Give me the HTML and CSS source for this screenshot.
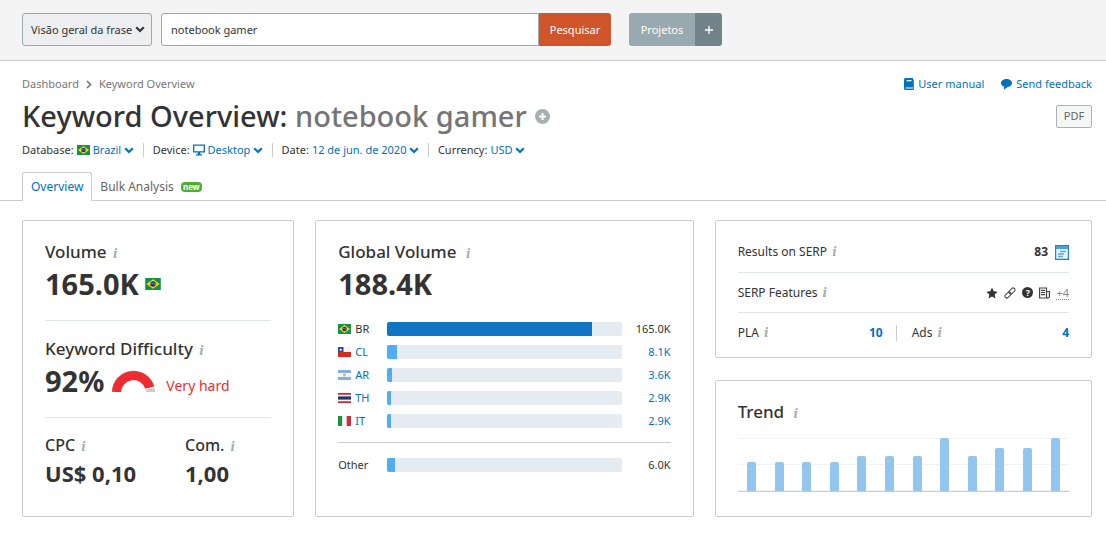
FILE: index.html
```html
<!DOCTYPE html>
<html lang="en">
<head>
<meta charset="utf-8">
<meta name="viewport" content="width=device-width, initial-scale=1">
<title>Keyword Overview: notebook gamer</title>
<link rel="stylesheet" href="styles.css">
</head>
<body>
<svg class="sprite" aria-hidden="true">
  <symbol id="chevron" viewBox="0 0 10 7"><path d="M1.2 1.2 5 5l3.8-3.8" fill="none" stroke="currentColor" stroke-width="2.2"/></symbol>
  <symbol id="flag-br" viewBox="0 0 13 10"><path fill="#129347" d="M0 0h13v10H0z"/><path fill="#f3d51f" d="M6.500 1 12 5 6.500 9 1 5z"/><circle cx="6.500" cy="5" r="2.300" fill="#29346f"/><path d="M4.500 4.300q2.200-.2 4 1.300" stroke="#9aa7c4" stroke-width=".6" fill="none"/></symbol>
  <symbol id="flag-cl" viewBox="0 0 13 10"><path fill="#f4f4f4" d="M0 0h13v5H0z"/><path fill="#d52b1e" d="M0 5h13v5H0z"/><path fill="#1f4a9c" d="M0 0h5.500v5H0z"/><path fill="#fff" d="m2.700 1 .5 1.200h1.200l-1 .8.4 1.200-1.100-.7-1.100.7.4-1.200-1-.8h1.200z"/></symbol>
  <symbol id="flag-ar" viewBox="0 0 13 10"><path fill="#7fb2dd" d="M0 0h13v10H0z"/><path fill="#f4f4f4" d="M0 3h13v4H0z"/><circle cx="6.500" cy="5" r="1.500" fill="#eeb04c"/></symbol>
  <symbol id="flag-th" viewBox="0 0 13 10"><path fill="#c9242f" d="M0 0h13v10H0z"/><path fill="#f4f4f4" d="M0 1.700h13v6.600H0z"/><path fill="#22346f" d="M0 3.400h13v3.200H0z"/></symbol>
  <symbol id="flag-it" viewBox="0 0 13 10"><path fill="#189048" d="M0 0h4.400v10H0z"/><path fill="#f4f4f4" d="M4.400 0h4.300v10H4.400z"/><path fill="#c9303a" d="M8.700 0H13v10H8.700z"/></symbol>
</svg>

<header class="topbar">
  <form class="search" onsubmit="return false">
    <span class="scope">
      <select class="scope-select" aria-label="Tipo de pesquisa"><option>Visão geral da frase</option></select>
      <svg class="chevron"><use href="#chevron"/></svg>
    </span>
    <span class="query">
      <input class="query-input" type="text" value="notebook gamer" aria-label="Frase">
      <button class="query-submit" type="submit">Pesquisar</button>
    </span>
  </form>
  <div class="projects">
    <button class="projects-open" type="button">Projetos</button>
    <button class="projects-add" type="button" aria-label="Novo projeto"><svg width="10" height="10" viewBox="0 0 10 10"><path d="M5 1v8M1 5h8" stroke="currentColor" stroke-width="1.300"/></svg></button>
  </div>
</header>

<section class="page-head">
  <div class="crumb-row">
    <nav class="crumbs" aria-label="Breadcrumb">
      <a href="#">Dashboard</a>
      <svg width="6" height="9" viewBox="0 0 6 9"><path d="m1 1 3.500 3.500L1 8" fill="none" stroke="#777" stroke-width="1.700"/></svg>
      <a href="#">Keyword Overview</a>
    </nav>
    <nav class="help" aria-label="Help">
      <a href="#"><svg width="10" height="12" viewBox="0 0 10 12"><path fill="currentColor" d="M1.500 0H9v9.500H1.500v1H9v-9h.8V12H1.500A1.500 1.500 0 0 1 0 10.500v-9A1.500 1.500 0 0 1 1.500 0z"/><path d="M2.500 2.700h5" stroke="#fff" stroke-width="1.200"/></svg>User manual</a>
      <a href="#"><svg width="11" height="12" viewBox="0 0 11 12"><path fill="currentColor" d="M5.500 1C8.600 1 11 2.700 11 5c0 2-1.800 3.700-4.400 4L3 11.700V8.600C1.200 8 0 6.600 0 5c0-2.300 2.400-4 5.500-4z"/></svg>Send feedback</a>
    </nav>
  </div>
  <div class="title-row">
    <h1 class="title">Keyword Overview: <span class="phrase">notebook gamer</span></h1>
    <button class="add" type="button" aria-label="Add keyword"><svg width="15" height="15" viewBox="0 0 15 15"><circle cx="7.500" cy="7.500" r="7.500" fill="#a5b0b3"/><path d="M7.500 4v7M4 7.500h7" stroke="#fff" stroke-width="2"/></svg></button>
    <button class="pdf" type="button">PDF</button>
  </div>
  <div class="filters">
    <div class="filter"><label for="database">Database:</label><svg class="flag"><use href="#flag-br"/></svg>
      <span class="pick"><select id="database"><option>Brazil</option></select><svg class="chevron"><use href="#chevron"/></svg></span></div>
    <div class="filter"><label for="device">Device:</label><svg width="12" height="12" viewBox="0 0 12 12"><path d="M.7 1.200h10.600v6.600H.7z" fill="none" stroke="#0071bc" stroke-width="1.300"/><path d="M4.800 8h2.400v2.200H9v1.300H3v-1.300h1.800z" fill="#0071bc"/></svg>
      <span class="pick"><select id="device"><option>Desktop</option></select><svg class="chevron"><use href="#chevron"/></svg></span></div>
    <div class="filter"><label for="date">Date:</label>
      <span class="pick"><select id="date"><option>12 de jun. de 2020</option></select><svg class="chevron"><use href="#chevron"/></svg></span></div>
    <div class="filter"><label for="currency">Currency:</label>
      <span class="pick"><select id="currency"><option>USD</option></select><svg class="chevron"><use href="#chevron"/></svg></span></div>
  </div>
</section>

<nav class="tabs" aria-label="Reports">
  <a class="tab tab-active" href="#" aria-current="page">Overview</a>
  <a class="tab" href="#">Bulk Analysis <span class="badge">new</span></a>
</nav>

<main class="board">
  <section class="card volume">
    <div class="metric">
      <h2 class="label">Volume <span class="info">i</span></h2>
      <p class="figure">165.0K <svg class="flag flag-large"><use href="#flag-br"/></svg></p>
    </div>
    <div class="metric">
      <h2 class="label">Keyword Difficulty <span class="info">i</span></h2>
      <p class="figure">92%
        <svg class="gauge" width="43" height="22" viewBox="0 0 43 22"><path d="M4.500 22a17 17 0 0 1 34 0" fill="none" stroke="#ccc" stroke-width="9"/><path d="M4.500 22a17 17 0 0 1 33.300-4.200" fill="none" stroke="#ee2c30" stroke-width="9"/><path d="m33 19.300 10-2.200" stroke="#fff"/></svg>
        <span class="verdict">Very hard</span></p>
    </div>
    <div class="metric metric-pair">
      <div><h2 class="label label-small">CPC <span class="info">i</span></h2><p class="figure figure-small">US$ 0,10</p></div>
      <div><h2 class="label label-small">Com. <span class="info">i</span></h2><p class="figure figure-small">1,00</p></div>
    </div>
  </section>

  <section class="card global">
    <h2 class="label">Global Volume <span class="info info-wide">i</span></h2>
    <p class="figure">188.4K</p>
    <table class="countries" aria-label="Volume by country">
      <tbody>
        <tr><th scope="row"><span class="country"><svg class="flag"><use href="#flag-br"/></svg>BR</span></th><td><div class="bar"><div class="fill fill-main" style="width:87.300%"></div></div></td><td class="amount">165.0K</td></tr>
        <tr><th scope="row"><a class="country" href="#"><svg class="flag"><use href="#flag-cl"/></svg>CL</a></th><td><div class="bar"><div class="fill" style="width:4.300%"></div></div></td><td class="amount"><a href="#">8.1K</a></td></tr>
        <tr><th scope="row"><a class="country" href="#"><svg class="flag"><use href="#flag-ar"/></svg>AR</a></th><td><div class="bar"><div class="fill" style="width:1.900%"></div></div></td><td class="amount"><a href="#">3.6K</a></td></tr>
        <tr><th scope="row"><a class="country" href="#"><svg class="flag"><use href="#flag-th"/></svg>TH</a></th><td><div class="bar"><div class="fill" style="width:1.500%"></div></div></td><td class="amount"><a href="#">2.9K</a></td></tr>
        <tr><th scope="row"><a class="country" href="#"><svg class="flag"><use href="#flag-it"/></svg>IT</a></th><td><div class="bar"><div class="fill" style="width:1.500%"></div></div></td><td class="amount"><a href="#">2.9K</a></td></tr>
      </tbody>
      <tbody class="rest">
        <tr><th scope="row">Other</th><td><div class="bar"><div class="fill" style="width:3.200%"></div></div></td><td class="amount">6.0K</td></tr>
      </tbody>
    </table>
  </section>

  <div class="side">
    <section class="card serp">
      <div class="serp-row"><span>Results on SERP <span class="info">i</span></span>
        <span class="serp-count">83 <a href="#" aria-label="View SERP"><svg width="14" height="15" viewBox="0 0 14 15"><path d="M.6.6h12.800v13.800H.6z" fill="#e8f4fc" stroke="#1d84c9" stroke-width="1.200"/><path d="M1 2.500h12" stroke="#4aa0dc" stroke-width="3"/><path d="M5 6.500h6M3 9h6M3 11.500h5" stroke="#5babdf" stroke-width="1.300"/></svg></a></span></div>
      <div class="serp-row"><span>SERP Features <span class="info">i</span></span>
        <span class="features">
          <svg width="12" height="12" viewBox="0 0 12 12"><path fill="#333" d="m6 .5 1.700 3.700 4 .5-3 2.700.8 4L6 9.400l-3.500 2 .8-4-3-2.700 4-.5z"/></svg>
          <svg width="12" height="12" viewBox="0 0 12 12" fill="none" stroke="#444"><rect x="-3.500" y="-1.900" width="7" height="3.800" rx="1.900" transform="translate(8 4) rotate(-45)"/><rect x="-3.500" y="-1.900" width="7" height="3.800" rx="1.900" transform="translate(4 8) rotate(-45)"/></svg>
          <span class="question">?</span>
          <svg width="11" height="12" viewBox="0 0 11 12" fill="none" stroke="#444" stroke-width="1.200"><path d="M.6 1h6.900v10H.6zM7.500 4.500h2.900V9.500a1.400 1.400 0 0 1-2.900 0M1 11h8"/><path d="M2 3.300h4M2 5.500h4M2 7.700h4"/></svg>
          <a class="more" href="#">+4</a>
        </span></div>
      <div class="serp-row serp-split">
        <div class="ad-stat"><span>PLA <span class="info">i</span></span><a href="#">10</a></div>
        <div class="ad-stat"><span>Ads <span class="info">i</span></span><a href="#">4</a></div>
      </div>
    </section>
    <section class="card trend">
      <h2 class="label">Trend <span class="info info-wide">i</span></h2>
      <div class="chart" role="img" aria-label="Monthly volume trend">
        <div class="slot"><div class="month" style="height:55%"></div></div>
        <div class="slot"><div class="month" style="height:55%"></div></div>
        <div class="slot"><div class="month" style="height:55%"></div></div>
        <div class="slot"><div class="month" style="height:55%"></div></div>
        <div class="slot"><div class="month" style="height:66%"></div></div>
        <div class="slot"><div class="month" style="height:66%"></div></div>
        <div class="slot"><div class="month" style="height:66%"></div></div>
        <div class="slot"><div class="month" style="height:100%"></div></div>
        <div class="slot"><div class="month" style="height:66%"></div></div>
        <div class="slot"><div class="month" style="height:81%"></div></div>
        <div class="slot"><div class="month" style="height:81%"></div></div>
        <div class="slot"><div class="month" style="height:100%"></div></div>
      </div>
    </section>
  </div>
</main>
</body>
</html>
```
FILE: styles.css
```css
* { box-sizing: border-box; }
body {
  margin: 0;
  background: #fff;
  color: #333;
  font: 11px/16px "Noto Sans", "Open Sans", sans-serif;
}
h1, h2, p { margin: 0; }
a { color: #0071bc; text-decoration: none; }
button, input, select { font: inherit; margin: 0; }
button { cursor: pointer; }
svg { flex: none; display: block; }
.sprite { display: none; }
.chevron { width: 10px; height: 7px; }
.flag { width: 13px; height: 10px; }
.flag-large { width: 16px; height: 12px; }

.topbar {
  display: flex;
  gap: 18px;
  padding: 13px 22px 14px;
  background: #f4f4f4;
  border-bottom: 1px solid #ccc;
}
.search { display: flex; gap: 9px; flex: 0 1 589px; }
.scope, .pick { display: inline-grid; align-items: center; }
.scope > *, .pick > * { grid-area: 1 / 1; }
.scope .chevron, .pick .chevron { justify-self: end; pointer-events: none; }
.scope { width: 130px; }
.scope .chevron { margin-right: 7px; }
.scope-select {
  appearance: none;
  width: 100%;
  height: 33px;
  padding: 0 16px 0 8px;
  border: 1px solid #98a9af;
  border-radius: 3px;
  background: #eceef0;
  color: #333;
}
.query { display: flex; flex: 1; }
.query-input {
  flex: 1;
  min-width: 0;
  height: 33px;
  padding: 0 9px;
  border: 1px solid #98a9af;
  border-radius: 3px 0 0 3px;
  background: #fff;
  color: #333;
}
.query-submit {
  width: 72px;
  padding: 0;
  border: 0;
  border-radius: 0 3px 3px 0;
  background: #d1552b;
  color: #fff;
}
.projects { display: flex; color: #fff; }
.projects button { height: 33px; padding: 0; border: 0; color: #fff; }
.projects .projects-open { width: 66px; background: #98a9af; border-radius: 3px 0 0 3px; }
.projects .projects-add { display: grid; place-items: center; width: 27px; background: #728489; border-radius: 0 3px 3px 0; }

.page-head { padding: 15px 14px 0 22px; }
.crumb-row { display: flex; justify-content: space-between; }
.crumbs, .help, .help a, .title-row, .filters, .filter { display: flex; align-items: center; }
.crumbs { gap: 7px; }
.crumbs a { color: #777; }
.help { gap: 17px; }
.help a { gap: 4px; }
.title-row { gap: 8px; height: 48px; }
.title { font-size: 29px; line-height: 40px; font-weight: 500; white-space: nowrap; }
.phrase { color: #757575; }
.add { padding: 0; border: 0; background: none; }
.pdf {
  width: 36px;
  height: 23px;
  margin-left: auto;
  padding: 0;
  border: 1px solid #a9b4b8;
  border-radius: 2px;
  background: #f5f7f7;
  color: #666;
}
.filters { height: 20px; }
.filter { gap: 3px; height: 14px; }
.filter + .filter { margin-left: 9px; padding-left: 9px; border-left: 1px solid #ccc; }
.pick { color: #0071bc; }
.pick select {
  appearance: none;
  padding: 0 12px 0 0;
  border: 0;
  background: none;
  color: inherit;
}

.tabs { display: flex; margin-top: 12px; padding-left: 22px; border-bottom: 1px solid #ccc; font-size: 12px; }
.tab { display: flex; align-items: center; gap: 7px; height: 28px; padding: 1px 8px 0; color: #666; }
.tab-active {
  margin-bottom: -1px;
  height: 29px;
  padding: 0 8px;
  border: 1px solid #ccc;
  border-bottom-color: #fff;
  border-radius: 3px 3px 0 0;
  background: #fff;
  color: #0071bc;
}
.badge {
  width: 21px;
  height: 10px;
  border-radius: 4px;
  background: #4faf34;
  color: #fff;
  font-size: 8px;
  line-height: 9px;
  font-weight: 700;
  text-align: center;
}

.board {
  display: grid;
  grid-template-columns: 272fr 378fr 377fr;
  gap: 21px;
  padding: 19px 14px 17px 22px;
}
.card { border: 1px solid #ccc; border-radius: 2px; background: #fff; }
.label { font-size: 17px; line-height: 25px; font-weight: 500; white-space: nowrap; }
.info {
  margin-left: 2px;
  color: #a5b0b3;
  font: italic 700 12px/12px "DejaVu Serif", serif;
}
.info-wide { margin-left: 5px; }
.figure { display: flex; align-items: center; gap: 6px; font-size: 29px; line-height: 40px; font-weight: 700; }
.volume { padding: 0 22px; }
.metric { padding: 15px 0 16px; }
.metric + .metric { border-top: 1px solid #e0e6e8; }
.metric:first-child { padding-top: 18px; }
.gauge { margin-left: 2px; }
.verdict { margin: 10px 0 0 5px; color: #ee2c30; font-size: 14px; line-height: 20px; font-weight: 400; }
.metric-pair { display: grid; grid-template-columns: 140px 1fr; }
.label-small { font-size: 16px; }
.figure-small { font-size: 22px; line-height: 30px; }

.global { padding: 18px 22px 0; }
.countries { width: 100%; margin-top: 13px; border-collapse: collapse; table-layout: fixed; }
.countries th, .countries td { height: 23px; padding: 0; font-weight: 400; text-align: left; }
.countries th { width: 49px; }
.countries .amount { width: 49px; text-align: right; }
.country { display: flex; align-items: center; gap: 4px; }
.bar { height: 14px; border-radius: 2px; background: #e4ebf1; overflow: hidden; }
.fill { height: 100%; background: #50adf4; }
.fill-main { background: #0f75c3; }
.rest::before { content: ""; display: table-row; height: 10px; }
.rest tr { border-top: 1px solid #ccc; }
.countries .rest th, .countries .rest td { height: 36px; padding-top: 10px; }

.side { display: flex; flex-direction: column; gap: 22px; }
.serp { padding: 11px 22px 5px; font-size: 12px; }
.serp-row { display: flex; align-items: center; justify-content: space-between; height: 40px; }
.serp-row + .serp-row { border-top: 1px solid #e0e6e8; }
.serp-count { display: flex; align-items: center; gap: 7px; font-weight: 700; }
.features { display: flex; align-items: center; gap: 6px; }
.question {
  width: 11px;
  height: 11px;
  border-radius: 50%;
  background: #333;
  color: #fff;
  font-size: 9px;
  line-height: 11px;
  font-weight: 700;
  text-align: center;
}
.more { color: #888; font-size: 11px; line-height: 13px; border-bottom: 1px dotted #888; }
.serp-split { display: grid; grid-template-columns: 145px 1fr; }
.ad-stat { display: flex; justify-content: space-between; }
.ad-stat a { font-weight: 700; }
.ad-stat + .ad-stat { margin-left: 13px; padding-left: 15px; border-left: 1px solid #ccc; }
.trend { flex: 1; padding: 18px 22px 24px; }
.chart {
  display: flex;
  height: 54px;
  margin-top: 14px;
  border-bottom: 1px solid #ccc;
  background: linear-gradient(#f2f2f2 1px, transparent 1px) 0 0 / 100% 26px;
}
.slot { flex: 1; display: flex; align-items: flex-end; justify-content: center; }
.month { width: 9px; border-radius: 2px 2px 0 0; background: #92c6ef; }
```
